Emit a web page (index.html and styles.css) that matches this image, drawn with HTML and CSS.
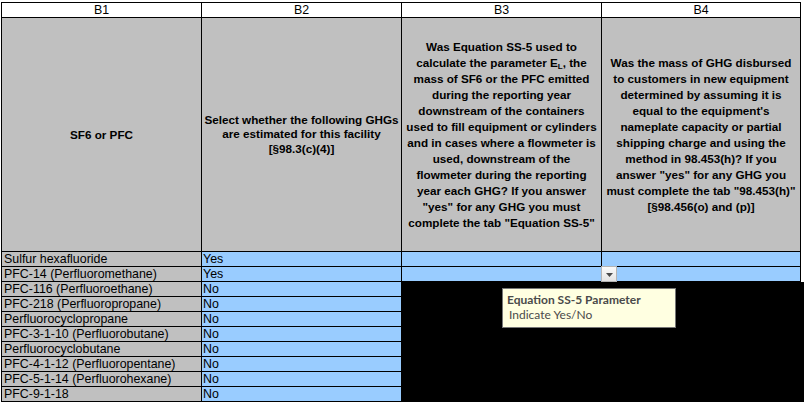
FILE: index.html
```html
<!DOCTYPE html>
<html>
<head>
<meta charset="utf-8">
<link rel="stylesheet" href="styles.css">
</head>
<body>
<div class="sheet">
  <div class="colhead">B1</div>
  <div class="colhead">B2</div>
  <div class="colhead">B3</div>
  <div class="colhead">B4</div>

  <div class="hdr"><div class="hdr-text">SF6 or PFC</div></div>
  <div class="hdr tight"><div class="hdr-text">Select whether the following GHGs<br>are estimated for this facility<br>[§98.3(c)(4)]</div></div>
  <div class="hdr"><div class="hdr-text">Was Equation SS-5 used to<br>calculate the parameter E<sub>L</sub>, the<br>mass of SF6 or the PFC emitted<br>during the reporting year<br>downstream of the containers<br>used to fill equipment or cylinders<br>and in cases where a flowmeter is<br>used, downstream of the<br>flowmeter during the reporting<br>year each GHG? If you answer<br>"yes" for any GHG you must<br>complete the tab "Equation SS-5"</div></div>
  <div class="hdr"><div class="hdr-text">Was the mass of GHG disbursed<br>to customers in new equipment<br>determined by assuming it is<br>equal to the equipment's<br>nameplate capacity or partial<br>shipping charge and using the<br>method in 98.453(h)? If you<br>answer "yes" for any GHG you<br>must complete the tab "98.453(h)"<br>[§98.456(o) and (p)]</div></div>

  <div class="name">Sulfur hexafluoride</div><div class="val">Yes</div><div class="val"></div><div class="val"></div>
  <div class="name">PFC-14 (Perfluoromethane)</div><div class="val">Yes</div><div class="val"></div><div class="val"></div>
  <div class="name">PFC-116 (Perfluoroethane)</div><div class="val">No</div><div class="val"></div><div class="val"></div>
  <div class="name">PFC-218 (Perfluoropropane)</div><div class="val">No</div><div class="val"></div><div class="val"></div>
  <div class="name">Perfluorocyclopropane</div><div class="val">No</div><div class="val"></div><div class="val"></div>
  <div class="name">PFC-3-1-10 (Perfluorobutane)</div><div class="val">No</div><div class="val"></div><div class="val"></div>
  <div class="name">Perfluorocyclobutane</div><div class="val">No</div><div class="val"></div><div class="val"></div>
  <div class="name">PFC-4-1-12 (Perfluoropentane)</div><div class="val">No</div><div class="val"></div><div class="val"></div>
  <div class="name">PFC-5-1-14 (Perfluorohexane)</div><div class="val">No</div><div class="val"></div><div class="val"></div>
  <div class="name">PFC-9-1-18</div><div class="val">No</div><div class="val"></div><div class="val"></div>
</div>

<div class="blackout"></div>

<div class="dropdown">
  <svg width="7" height="4" viewBox="0 0 7 4"><polygon points="0,0 7,0 3.5,4" fill="#4a4a4a"/></svg>
</div>

<div class="tip">
  <div class="tip-title">Equation SS-5 Parameter</div>
  <div class="tip-body">Indicate Yes/No</div>
</div>
</body>
</html>
```

FILE: styles.css
```css
html, body {
  margin: 0;
  padding: 0;
  background: #ffffff;
}

body {
  position: relative;
  width: 804px;
  height: 406px;
  overflow: hidden;
}

.sheet {
  display: grid;
  grid-template-columns: 199px 199px 199px 198px;
  grid-template-rows: 14px 233px repeat(10, 14px);
  gap: 1px;
  padding: 1px;
  background: #000000;
  width: max-content;
  margin: 2px 0 0 1px;
  font-family: "Liberation Sans", Arial, sans-serif;
  color: #000000;
}

.colhead {
  background: #ffffff;
  text-align: center;
  font-size: 12.4px;
  line-height: 14px;
}

.hdr {
  background: #c0c0c0;
  display: flex;
  align-items: center;
  justify-content: center;
  overflow: hidden;
}

.hdr-text {
  text-align: center;
  font-weight: bold;
  font-size: 11.7px;
  line-height: 16px;
  white-space: nowrap;
}

.hdr.tight .hdr-text {
  line-height: 14.5px;
}

.hdr-text sub {
  font-size: 8px;
  line-height: 0;
  vertical-align: -2px;
}

.name {
  background: #c0c0c0;
  padding-left: 2px;
  font-size: 12.4px;
  line-height: 14px;
  white-space: nowrap;
  overflow: hidden;
}

.val {
  background: #99ccff;
  padding-left: 1px;
  font-size: 12.4px;
  line-height: 14px;
  white-space: nowrap;
  overflow: hidden;
}

.blackout {
  position: absolute;
  left: 402px;
  top: 282px;
  right: 0;
  height: 120px;
  background: #000000;
}

.dropdown {
  position: absolute;
  left: 601px;
  top: 266px;
  width: 14px;
  height: 14px;
  border: 1px solid #b4b4b4;
  background: linear-gradient(#fafafa, #e4e4e4);
  display: flex;
  align-items: center;
  justify-content: center;
}

.dropdown svg {
  display: block;
  margin-top: 1px;
}

.tip {
  position: absolute;
  left: 502px;
  top: 288px;
  width: 168px;
  height: 38px;
  border: 1px solid #767676;
  background: #ffffe1;
  font-family: Lato, "Open Sans", sans-serif;
  font-size: 12px;
  color: #4a4a4a;
  padding: 0 0 0 4px;
  box-sizing: content-box;
}

.tip-title {
  font-weight: bold;
  line-height: 15px;
  margin-top: 3px;
}

.tip-body {
  line-height: 15px;
  padding-left: 2px;
}
```
